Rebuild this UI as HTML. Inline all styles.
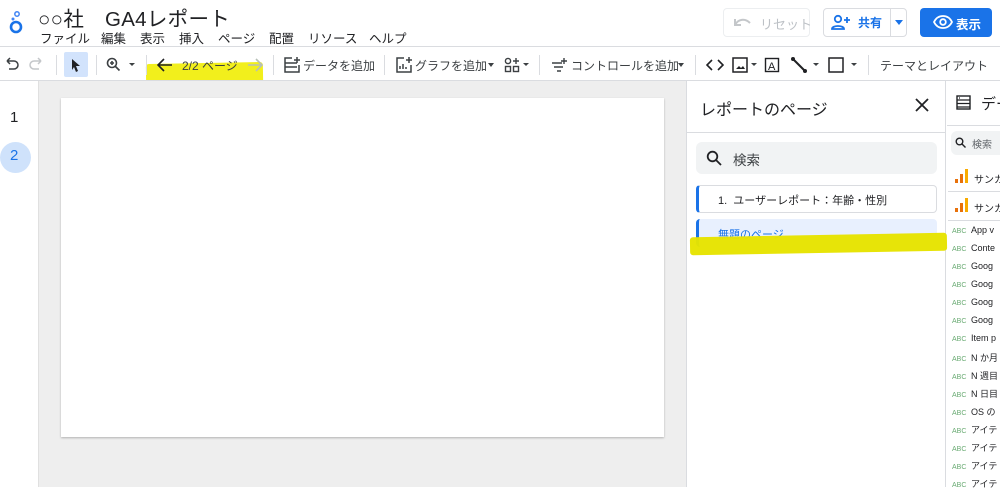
<!DOCTYPE html>
<html><head><meta charset="utf-8"><style>
*{margin:0;padding:0;box-sizing:border-box}
body{width:1000px;height:487px;overflow:hidden;background:#fff;font-family:"Liberation Sans","Noto Sans CJK JP",sans-serif;color:#202124;position:relative}
.a{position:absolute;white-space:nowrap}
.t{font-size:12px;color:#3c4043}
.m{position:absolute;top:28px;font-size:12.5px;color:#202124}
.sep{position:absolute;top:55px;width:1px;height:20px;background:#dadce0}
.row{position:absolute;left:952px;font-size:9px;color:#202124}
.row b{font-weight:normal;color:#6aab73;font-size:7px;margin-right:7px;display:inline-block;width:12px}
</style></head><body>
<!-- header -->
<svg class="a" style="left:8px;top:10px" width="16" height="26" viewBox="0 0 16 26"><circle cx="9" cy="4" r="2.2" fill="none" stroke="#4285f4" stroke-width="1.5"/><circle cx="5" cy="9" r="1.5" fill="#4285f4"/><circle cx="8" cy="17" r="5" fill="none" stroke="#1a73e8" stroke-width="2.6"/></svg>
<div class="a" style="left:38px;top:2px;font-size:20.5px;letter-spacing:0.3px;color:#202124">○○社　GA4レポート</div>
<div class="m" style="left:40px">ファイル</div>
<div class="m" style="left:101px">編集</div>
<div class="m" style="left:140px">表示</div>
<div class="m" style="left:179px">挿入</div>
<div class="m" style="left:218px">ページ</div>
<div class="m" style="left:269px">配置</div>
<div class="m" style="left:308px">リソース</div>
<div class="m" style="left:369px">ヘルプ</div>
<div class="a" style="left:723px;top:8px;width:87px;height:29px;border:1px solid #eceef0;border-radius:4px;font-size:13px;color:#bdc1c6;padding:5px 0 0 36px">リセット</div>
<svg class="a" style="left:732px;top:15px" width="20" height="14" viewBox="0 0 20 14"><path d="M3 4v6h6M3 10c3-6 10-7 15-2" fill="none" stroke="#c4c7ca" stroke-width="2"/></svg>
<div class="a" style="left:823px;top:8px;width:84px;height:29px;border:1px solid #dadce0;border-radius:4px"></div>
<div class="a" style="left:890px;top:8px;width:1px;height:29px;background:#dadce0"></div>
<svg class="a" style="left:831px;top:14px" width="20" height="16" viewBox="0 0 20 16"><circle cx="7" cy="5" r="3.2" fill="none" stroke="#1a73e8" stroke-width="1.8"/><path d="M1 15c0-4 12-4 12 0z" fill="none" stroke="#1a73e8" stroke-width="1.8"/><path d="M16 3v6M13 6h6" stroke="#1a73e8" stroke-width="1.8"/></svg>
<div class="a" style="left:858px;top:14px;font-size:12px;color:#1a73e8;font-weight:bold">共有</div>
<div class="a" style="left:895px;top:20px;border:4px solid transparent;border-top:5px solid #1a73e8"></div>
<div class="a" style="left:920px;top:8px;width:72px;height:29px;background:#1a73e8;border-radius:4px"></div>
<svg class="a" style="left:933px;top:15px" width="20" height="14" viewBox="0 0 20 14"><path d="M1 7c4-8 14-8 18 0c-4 8-14 8-18 0z" fill="none" stroke="#fff" stroke-width="1.8"/><circle cx="10" cy="7" r="2.8" fill="none" stroke="#fff" stroke-width="1.8"/></svg>
<div class="a" style="left:956px;top:14px;font-size:12.5px;color:#fff;font-weight:bold">表示</div>
<div class="a" style="left:0;top:46px;width:1000px;height:1px;background:#dadce0"></div>
<!-- toolbar -->
<div class="a" style="left:146px;top:63px;width:117px;height:21px;background:#f2ef1c;border-radius:3px;transform:rotate(-1deg)"></div>
<svg class="a" style="left:4px;top:56px" width="40" height="18" viewBox="0 0 40 18"><path d="M3 5h7a4 4 0 010 8H5M3 5l3-3M3 5l3 3" fill="none" stroke="#3c4043" stroke-width="1.5"/><path d="M37 5h-7a4 4 0 000 8h5M37 5l-3-3M37 5l-3 3" fill="none" stroke="#c4c7ca" stroke-width="1.5"/></svg>
<div class="sep" style="left:56px"></div>
<div class="a" style="left:64px;top:52px;width:24px;height:25px;background:#d2e3fc;border-radius:2px"></div>
<svg class="a" style="left:70px;top:58px" width="12" height="14" viewBox="0 0 12 14"><path d="M2 1l8 7h-4l2 5-2 1-2-5-2 3z" fill="#202124"/></svg>
<div class="sep" style="left:96px"></div>
<svg class="a" style="left:105px;top:57px" width="32" height="16" viewBox="0 0 32 16"><circle cx="7" cy="6" r="4.5" fill="none" stroke="#3c4043" stroke-width="1.6"/><path d="M10.5 9.5l4 4M5 6h4M7 4v4" stroke="#3c4043" stroke-width="1.6"/><path d="M24 6h6l-3 3z" fill="#3c4043"/></svg>
<div class="sep" style="left:146px"></div>
<svg class="a" style="left:157px;top:58px" width="16" height="14" viewBox="0 0 16 14"><path d="M15 7H2M7 1L1 7l6 6" fill="none" stroke="#202124" stroke-width="1.6"/></svg>
<div class="a t" style="left:182px;top:57px;font-size:12px;color:#3c4043">2/2 ページ</div>
<svg class="a" style="left:247px;top:58px" width="16" height="14" viewBox="0 0 16 14"><path d="M1 7h13M9 1l6 6-6 6" fill="none" stroke="#b7c0b7" stroke-width="1.6"/></svg>
<div class="sep" style="left:273px"></div>
<svg class="a" style="left:283px;top:56px" width="18" height="18" viewBox="0 0 18 18"><path d="M9 2H2v14h14V9M2 7h12M2 11h12M14 1v6M11 4h6" fill="none" stroke="#3c4043" stroke-width="1.5"/></svg>
<div class="a t" style="left:303px;top:57px">データを追加</div>
<div class="sep" style="left:384px"></div>
<svg class="a" style="left:395px;top:56px" width="18" height="18" viewBox="0 0 18 18"><path d="M9 2H2v14h14V9M5 13v-3M8 13V8M11 13v-2M14 1v6M11 4h6" fill="none" stroke="#3c4043" stroke-width="1.5"/></svg>
<div class="a t" style="left:415px;top:57px">グラフを追加</div>
<div class="a" style="left:488px;top:63px;border:3px solid transparent;border-top:4px solid #3c4043"></div>
<svg class="a" style="left:504px;top:57px" width="26" height="16" viewBox="0 0 26 16"><circle cx="4" cy="4" r="2.6" fill="none" stroke="#3c4043" stroke-width="1.4"/><rect x="1.5" y="9.5" width="5" height="5" fill="none" stroke="#3c4043" stroke-width="1.4"/><rect x="9.5" y="9.5" width="5" height="5" fill="none" stroke="#3c4043" stroke-width="1.4"/><path d="M12 1v6M9 4h6" stroke="#3c4043" stroke-width="1.4"/><path d="M19 6h6l-3 3z" fill="#3c4043"/></svg>
<div class="sep" style="left:539px"></div>
<svg class="a" style="left:551px;top:57px" width="16" height="16" viewBox="0 0 16 16"><path d="M1 6h10M3 10h9M6 14h4M13 1v6M10 4h6" stroke="#3c4043" stroke-width="1.4"/></svg>
<div class="a t" style="left:571px;top:57px">コントロールを追加</div>
<div class="a" style="left:678px;top:63px;border:3px solid transparent;border-top:4px solid #3c4043"></div>
<div class="sep" style="left:695px"></div>
<svg class="a" style="left:706px;top:58px" width="18" height="14" viewBox="0 0 18 14"><path d="M6 2L1 7l5 5M12 2l5 5-5 5" fill="none" stroke="#202124" stroke-width="1.6"/></svg>
<svg class="a" style="left:732px;top:57px" width="26" height="16" viewBox="0 0 26 16"><rect x="1" y="1" width="14" height="14" fill="none" stroke="#202124" stroke-width="1.5"/><path d="M4 12l3-3 2 2 2-2 2 3z" fill="#202124"/><path d="M19 6h6l-3 3z" fill="#3c4043"/></svg>
<svg class="a" style="left:764px;top:57px" width="16" height="16" viewBox="0 0 16 16"><rect x="1.5" y="1.5" width="13" height="13" fill="none" stroke="#202124" stroke-width="1.4"/><text x="4" y="13" font-size="11" font-family="Liberation Sans" fill="#202124">A</text></svg>
<svg class="a" style="left:790px;top:56px" width="30" height="18" viewBox="0 0 30 18"><path d="M3 3l12 12" stroke="#202124" stroke-width="2"/><circle cx="3" cy="3" r="2" fill="#202124"/><circle cx="15" cy="15" r="2" fill="#202124"/><path d="M23 7h6l-3 3z" fill="#3c4043"/></svg>
<svg class="a" style="left:828px;top:57px" width="30" height="16" viewBox="0 0 30 16"><rect x="1" y="1" width="14" height="14" fill="none" stroke="#202124" stroke-width="1.5"/><path d="M23 6h6l-3 3z" fill="#3c4043"/></svg>
<div class="sep" style="left:868px"></div>
<div class="a t" style="left:880px;top:57px">テーマとレイアウト</div>
<div class="a" style="left:0;top:80px;width:1000px;height:1px;background:#dadce0"></div>
<!-- left rail + canvas -->
<div class="a" style="left:10px;top:109px;font-size:15px;color:#202124">1</div>
<div class="a" style="left:0;top:142px;width:31px;height:31px;border-radius:50%;background:#cfe2fb"></div>
<div class="a" style="left:10px;top:147px;font-size:15px;color:#1a73e8">2</div>
<div class="a" style="left:38px;top:81px;width:648px;height:406px;background:#eeeeee;border-left:1px solid #e0e0e0"></div>
<div class="a" style="left:61px;top:98px;width:603px;height:339px;background:#fff;box-shadow:0 1px 2px rgba(0,0,0,.25)"></div>
<!-- pages panel -->
<div class="a" style="left:686px;top:81px;width:260px;height:406px;background:#fff;border-left:1px solid #dadce0;border-right:1px solid #dadce0"></div>
<div class="a" style="left:700px;top:96px;font-size:16px;color:#202124">レポートのページ</div>
<svg class="a" style="left:915px;top:98px" width="14" height="14" viewBox="0 0 14 14"><path d="M1 1l12 12M13 1L1 13" stroke="#202124" stroke-width="1.8"/></svg>
<div class="a" style="left:687px;top:132px;width:258px;height:1px;background:#dadce0"></div>
<div class="a" style="left:696px;top:142px;width:241px;height:32px;background:#f1f3f4;border-radius:6px"></div>
<svg class="a" style="left:706px;top:150px" width="16" height="16" viewBox="0 0 16 16"><circle cx="6.5" cy="6.5" r="4.8" fill="none" stroke="#202124" stroke-width="1.8"/><path d="M10 10l5 5" stroke="#202124" stroke-width="1.8"/></svg>
<div class="a" style="left:733px;top:149px;font-size:13.5px;color:#3c4043">検索</div>
<div class="a" style="left:696px;top:185px;width:241px;height:28px;border:1px solid #dadce0;border-left:3px solid #1a73e8;border-radius:4px"></div>
<div class="a" style="left:718px;top:192px;font-size:11px;color:#202124">1.&nbsp; ユーザーレポート：年齢・性別</div>
<div class="a" style="left:696px;top:219px;width:241px;height:28px;background:#e8f0fe;border-left:3px solid #1a73e8;border-radius:4px"></div>
<div class="a" style="left:718px;top:226px;font-size:11px;color:#1a73e8">無題のページ</div>
<div class="a" style="left:690px;top:235px;width:257px;height:18px;background:#e6e300;border-radius:3px;transform:rotate(-1deg);opacity:.97"></div>
<!-- data panel -->
<svg class="a" style="left:956px;top:95px" width="15" height="15" viewBox="0 0 15 15"><rect x="1" y="1" width="13" height="13" fill="none" stroke="#202124" stroke-width="1.4"/><path d="M1 5h13M1 8.5h13M1 12h13M3 3h1" stroke="#202124" stroke-width="1.2"/></svg>
<div class="a" style="left:981px;top:93px;font-size:15px">デー</div>
<div class="a" style="left:947px;top:125px;width:53px;height:1px;background:#dadce0"></div>
<div class="a" style="left:951px;top:131px;width:60px;height:24px;background:#f1f3f4;border-radius:6px"></div>
<svg class="a" style="left:955px;top:137px" width="11" height="11" viewBox="0 0 11 11"><circle cx="4.5" cy="4.5" r="3.3" fill="none" stroke="#202124" stroke-width="1.4"/><path d="M7 7l3.5 3.5" stroke="#202124" stroke-width="1.4"/></svg>
<div class="a" style="left:972px;top:136px;font-size:10px;color:#5f6368">検索</div>
<svg class="a" style="left:955px;top:168px" width="14" height="16" viewBox="0 0 14 16"><rect x="0" y="11" width="3" height="4" fill="#e8710a"/><rect x="5" y="6" width="3" height="9" fill="#e8710a"/><rect x="10" y="1" width="3" height="14" fill="#f9ab00"/></svg>
<div class="a" style="left:974px;top:171px;font-size:10px">サンカ</div>
<div class="a" style="left:948px;top:191px;width:52px;height:1px;background:#dadce0"></div>
<svg class="a" style="left:955px;top:197px" width="14" height="16" viewBox="0 0 14 16"><rect x="0" y="11" width="3" height="4" fill="#e8710a"/><rect x="5" y="6" width="3" height="9" fill="#e8710a"/><rect x="10" y="1" width="3" height="14" fill="#f9ab00"/></svg>
<div class="a" style="left:974px;top:200px;font-size:10px">サンカ</div>
<div class="a" style="left:948px;top:220px;width:52px;height:1px;background:#dadce0"></div>
<div class="row" style="top:225px"><b>ABC</b>App v</div>
<div class="row" style="top:243px"><b>ABC</b>Conte</div>
<div class="row" style="top:261px"><b>ABC</b>Goog</div>
<div class="row" style="top:279px"><b>ABC</b>Goog</div>
<div class="row" style="top:297px"><b>ABC</b>Goog</div>
<div class="row" style="top:315px"><b>ABC</b>Goog</div>
<div class="row" style="top:333px"><b>ABC</b>Item p</div>
<div class="row" style="top:351px"><b>ABC</b>N か月</div>
<div class="row" style="top:369px"><b>ABC</b>N 週目</div>
<div class="row" style="top:387px"><b>ABC</b>N 日目</div>
<div class="row" style="top:405px"><b>ABC</b>OS の</div>
<div class="row" style="top:423px"><b>ABC</b>アイテ</div>
<div class="row" style="top:441px"><b>ABC</b>アイテ</div>
<div class="row" style="top:459px"><b>ABC</b>アイテ</div>
<div class="row" style="top:477px"><b>ABC</b>アイテ</div>
</body></html>
